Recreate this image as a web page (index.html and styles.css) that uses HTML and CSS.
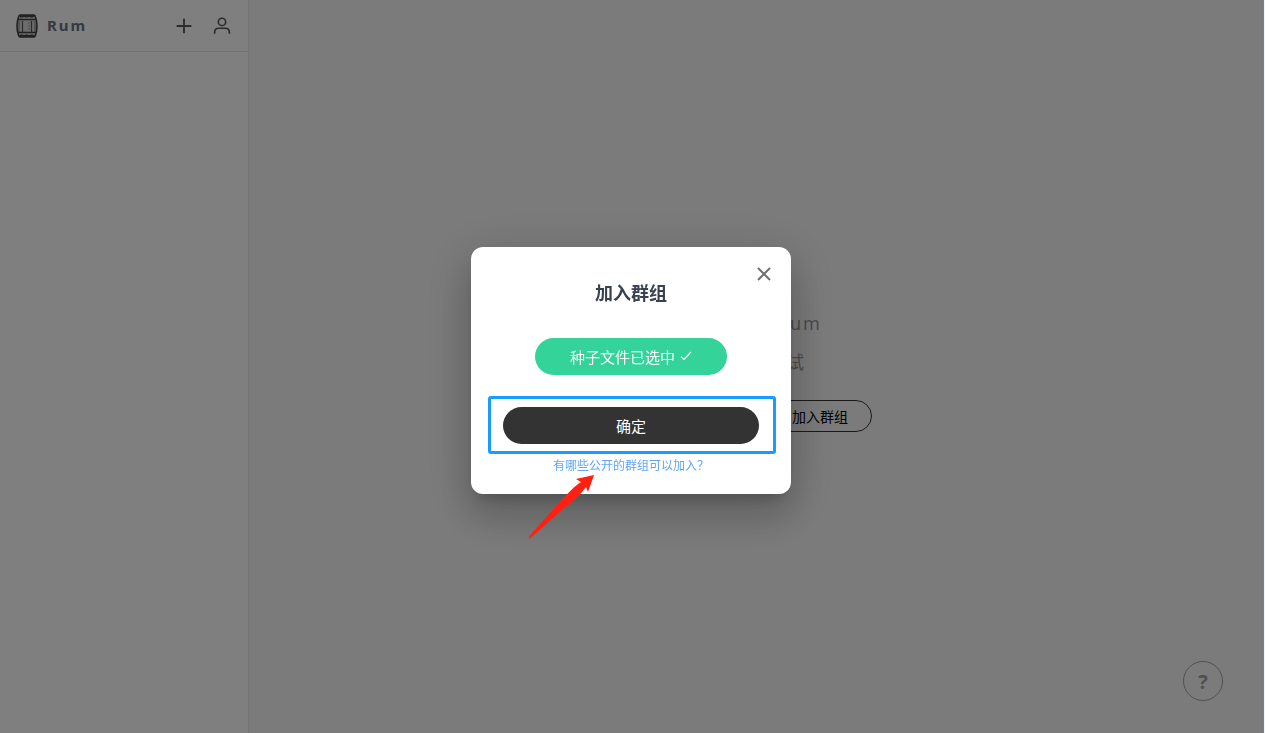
FILE: index.html
```html
<!DOCTYPE html>
<html lang="zh-CN">
<head>
<meta charset="utf-8">
<meta name="viewport" content="width=device-width, initial-scale=1">
<title>Rum</title>
<link rel="stylesheet" href="styles.css">
</head>
<body>
<div class="app">
  <aside class="sidebar">
    <header class="sidebar-header">
      <svg class="logo" viewBox="0 0 22 26" aria-hidden="true">
        <path d="M4 2h14q1 0 1.500 2c2 6 2 12 0 18q-.5 2-1.500 2H4q-1 0-1.500-2c-2-6-2-12 0-18Q3 2 4 2z" fill="#d8d8d8" stroke="#444" stroke-width="1.600"/>
        <path d="M3.500 3h15M3.500 23h15" stroke="#444" stroke-width="2"/>
        <path d="M4 4.500h14M4 21.500h14" stroke="#999" stroke-width="1" stroke-dasharray="3 2"/>
        <path d="M2 6.500h18M2 19.500h18" stroke="#444" stroke-width="1.500"/>
        <path d="M6.500 8v11M15.500 8v11" stroke="#555" stroke-width="1.200"/>
        <path d="M3 8v11M19 8v11" stroke="#777" stroke-width="1"/>
        <path d="M13 9v2M13 12v2M13 15v2" stroke="#999" stroke-width="1"/>
      </svg>
      <span class="brand">Rum</span>
      <button class="icon-button" type="button" aria-label="添加">
        <svg viewBox="0 0 24 24"><path d="M12 4v16M4 12h16" fill="none" stroke="#555" stroke-width="2"/></svg>
      </button>
      <button class="icon-button" type="button" aria-label="我的">
        <svg viewBox="0 0 24 24"><circle cx="12" cy="7.500" r="4" fill="none" stroke="#555" stroke-width="1.800"/><path d="M4 20.500v-1.500c0-3 2-4.500 4.500-4.500h7c2.500 0 4.500 1.500 4.500 4.500v1.500" fill="none" stroke="#555" stroke-width="1.800"/></svg>
      </button>
    </header>
  </aside>
  <main class="main">
    <p class="welcome">欢迎使用 Rum</p>
    <p class="hint">先加入试试</p>
    <div class="actions">
      <button class="outline-button" type="button">创建群组</button>
      <button class="outline-button" type="button">加入群组</button>
    </div>
    <button class="help" type="button" aria-label="帮助">?</button>
  </main>
  <div class="edge"></div>
</div>
<div class="overlay">
  <section class="dialog" role="dialog" aria-modal="true" aria-labelledby="dialog-title">
    <button class="close" type="button" aria-label="关闭">
      <svg viewBox="0 0 24 24"><path d="M6 6l12 12M18 6L6 18" fill="none" stroke="#707070" stroke-width="2"/></svg>
    </button>
    <h1 class="title" id="dialog-title">加入群组</h1>
    <button class="seed" type="button">种子文件已选中
      <svg class="check" viewBox="0 0 12 12"><path d="M1 6.500l3 3L11 2" fill="none" stroke="#fff" stroke-width="1.200"/></svg>
    </button>
    <div class="confirm-row">
      <button class="confirm" type="button">确定</button>
      <div class="highlight"></div>
    </div>
    <a class="link" href="#">有哪些公开的群组可以加入？</a>
    <svg class="arrow" viewBox="0 0 68 66" aria-hidden="true"><path d="M66 1L48 5l5 3Q46 12 30 30L.5 63l1 2L34 36Q50 24 58 13l2 5z" fill="#ff2012"/></svg>
  </section>
</div>
</body>
</html>
```
FILE: styles.css
```css
* { box-sizing: border-box; }

body {
  margin: 0;
  font-family: "Noto Sans", "Noto Sans CJK SC", sans-serif;
}

button {
  padding: 0;
  border: 0;
  background: none;
  font-family: inherit;
  cursor: pointer;
}

p, h1 { margin: 0; }

.app {
  display: flex;
  min-height: 100vh;
  background: #f7f7f7;
}

.sidebar {
  width: 249px;
  flex: none;
  background: #fff;
  border-right: 1px solid #e5e7eb;
}

.sidebar-header {
  display: flex;
  align-items: center;
  height: 52px;
  padding: 0 15px 0 16px;
  border-bottom: 1px solid #e5e7eb;
}

.logo {
  width: 22px;
  height: 26px;
}

.brand {
  flex: 1;
  margin-left: 9px;
  padding-bottom: 2px;
  color: #6b7280;
  font-size: 15px;
  font-weight: 700;
  letter-spacing: 2px;
}

.icon-button {
  width: 22px;
  height: 22px;
  margin-left: 16px;
}

.icon-button svg, .close svg {
  display: block;
  width: 100%;
  height: 100%;
}

.main {
  position: relative;
  flex: 1;
  display: flex;
  flex-direction: column;
  align-items: center;
  justify-content: center;
  padding-top: 8px;
  text-align: center;
}

.welcome, .hint {
  color: #999;
  font-size: 18px;
  line-height: 27px;
  letter-spacing: 2px;
}

.hint {
  margin-top: 12px;
}

.actions {
  display: flex;
  gap: 24px;
  margin-top: 24px;
}

.outline-button {
  width: 104px;
  height: 32px;
  border: 1px solid #333;
  border-radius: 16px;
  color: #000;
  font-size: 14px;
}

.help {
  position: absolute;
  right: 40px;
  bottom: 32px;
  width: 40px;
  height: 40px;
  border: 1px solid #a0a0a0;
  border-radius: 50%;
  color: #a0a0a0;
  font-size: 20px;
  font-weight: 700;
}

.edge {
  position: relative;
  z-index: 2;
  width: 2px;
  border-left: 1px solid #1fa3c4;
  background: #e8f8fd;
}

.overlay {
  position: fixed;
  inset: 0;
  z-index: 1;
  display: flex;
  align-items: center;
  justify-content: center;
  padding: 8px 3px 0 0;
  background: rgba(0, 0, 0, 0.5);
}

.dialog {
  position: relative;
  display: flex;
  flex-direction: column;
  align-items: center;
  width: 320px;
  padding: 32px 32px 19px;
  border-radius: 12px;
  background: #fff;
  box-shadow: 0 11px 15px -7px rgba(0, 0, 0, 0.2), 0 24px 38px 3px rgba(0, 0, 0, 0.14), 0 9px 46px 8px rgba(0, 0, 0, 0.12);
}

.close {
  position: absolute;
  top: 15px;
  right: 15px;
  width: 24px;
  height: 24px;
}

.title {
  color: #374151;
  font-size: 18px;
  line-height: 28px;
}

.seed {
  display: flex;
  align-items: center;
  justify-content: center;
  gap: 5px;
  width: 192px;
  height: 37px;
  margin-top: 31px;
  padding-bottom: 1px;
  border-radius: 19px;
  background: #34d399;
  color: #fff;
  font-size: 15px;
}

.check {
  width: 12px;
  height: 12px;
}

.confirm-row {
  position: relative;
  width: 100%;
  margin-top: 32px;
}

.highlight {
  position: absolute;
  inset: -11px -17px -10px -15px;
  border: 3px solid #1a9bff;
  border-radius: 3px;
  pointer-events: none;
}

.confirm {
  display: block;
  width: 100%;
  height: 37px;
  padding-bottom: 1px;
  border-radius: 19px;
  background: #333;
  color: #fff;
  font-size: 15px;
}

.link {
  margin-top: 13px;
  color: #60a5fa;
  font-size: 12px;
  line-height: 18px;
  text-decoration: none;
}

.arrow {
  position: absolute;
  left: 57px;
  top: 227px;
  width: 68px;
  height: 66px;
}
```
